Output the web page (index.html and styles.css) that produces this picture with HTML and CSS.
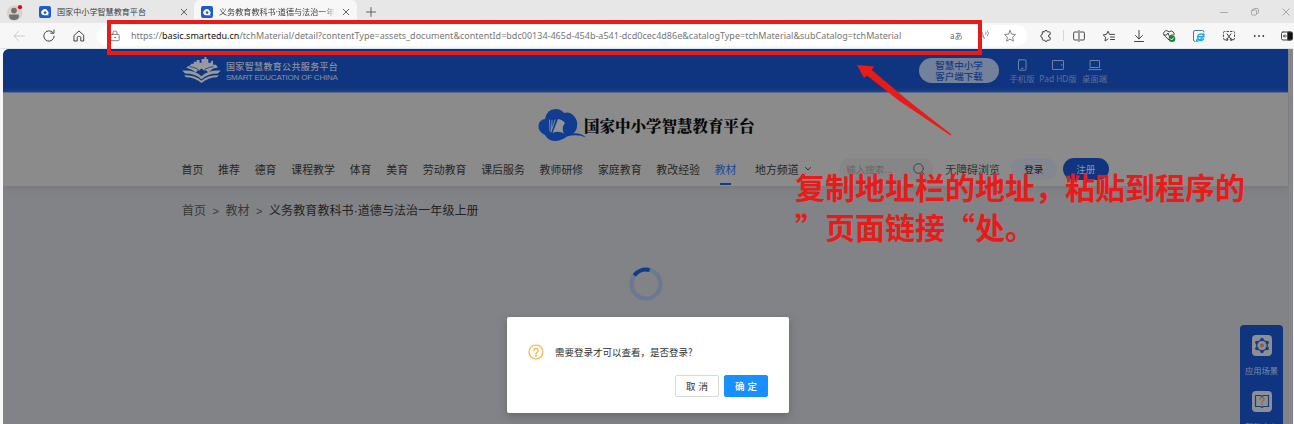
FILE: index.html
```
<!DOCTYPE html>
<html lang="zh-CN">
<head>
<meta charset="utf-8">
<title>国家中小学智慧教育平台</title>
<link rel="stylesheet" href="styles.css">
</head>
<body>
<div class="window">
  <header class="tabs">
    <svg class="avatar" width="18" height="20" viewBox="0 0 18 20"><circle cx="8.5" cy="10" r="7.8" fill="#d6d3d0"/><circle cx="8" cy="7.6" r="2.9" fill="#77716c"/><path d="M3 12.5q0-1 1-1h8q1 0 1 1 0 4.5-5 4.5t-5-4.500z" fill="#77716c"/><circle cx="14" cy="4.200" r="2.100" fill="#d80d18"/></svg>
    <div class="tab">
      <svg class="fav" viewBox="0 0 12 12"><rect width="12" height="12" rx="2" fill="#1f5ccb"/><path d="M3 8.400a2.300 2.300 0 0 1 .2-3.800 2.900 2.900 0 0 1 5.400.5 2 2 0 0 1 .3 3.300l1 .8H5a3 3 0 0 1-2-.8z" fill="#fff"/><circle cx="6.100" cy="6.600" r="1.300" fill="#1f5ccb"/></svg>
      <span class="tab-title">国家中小学智慧教育平台</span>
      <svg class="close" viewBox="0 0 8 8"><path d="M1.200 1.200l5.600 5.600M6.800 1.200L1.200 6.800"/></svg>
    </div>
    <div class="tab active">
      <svg class="fav" viewBox="0 0 12 12"><rect width="12" height="12" rx="2" fill="#1f5ccb"/><path d="M3 8.400a2.300 2.300 0 0 1 .2-3.800 2.900 2.900 0 0 1 5.400.5 2 2 0 0 1 .3 3.300l1 .8H5a3 3 0 0 1-2-.8z" fill="#fff"/><circle cx="6.100" cy="6.600" r="1.300" fill="#1f5ccb"/></svg>
      <span class="tab-title fade">义务教育教科书·道德与法治一年</span>
      <svg class="close" viewBox="0 0 8 8"><path d="M1.200 1.200l5.600 5.600M6.800 1.200L1.200 6.800"/></svg>
    </div>
    <svg class="plus" viewBox="0 0 10 10"><path d="M5 .5v9M.5 5h9"/></svg>
    <div class="controls">
      <svg viewBox="0 0 10 10"><path d="M1.500 5.500h7"/></svg>
      <svg viewBox="0 0 10 10"><rect x="1.500" y="3" width="5" height="5" rx="1"/><path d="M3.500 3V2.500q0-1 1-1h2.500q1.500 0 1.500 1.500v2.500q0 1-1 1h-1"/></svg>
      <svg viewBox="0 0 10 10"><path d="M1.800 1.800l6.400 6.400M8.200 1.800L1.800 8.200"/></svg>
    </div>
  </header>

  <div class="toolbar">
    <div class="nav-icons">
      <svg class="dim" viewBox="0 0 14 14"><path d="M12.500 7H2M6.500 2.500L2 7l4.500 4.500"/></svg>
      <svg viewBox="0 0 14 14"><path d="M12.200 7.200a5.200 5.200 0 1 1-1.600-4M12 1v3.200H8.700"/></svg>
      <svg viewBox="0 0 14 14"><path d="M2.300 6.200L7 2l4.700 4.200V12H8.800V8.600q0-1.100-1.100-1.100H6.300q-1.100 0-1.100 1.100V12H2.300z"/></svg>
    </div>
    <div class="address">
      <svg class="lock" viewBox="0 0 12 12"><rect x="1.800" y="4.300" width="8.400" height="6.400" rx="1.200"/><path d="M3.900 4.300V3a2.100 2.100 0 0 1 4.200 0v1.300"/><circle cx="6" cy="7.500" r=".5"/></svg>
      <span class="url">https://<b>basic.smartedu.cn</b>/tchMaterial/detail?contentType=assets_document&amp;contentId=bdc00134-465d-454b-a541-dcd0cec4d86e&amp;catalogType=tchMaterial&amp;subCatalog=tchMaterial</span>
      <span class="translate">aあ</span>
      <span class="read">A<svg viewBox="0 0 5 7"><path d="M.8 2q1 1 0 2.500M2.500.8q2.200 2.200 0 5"/></svg></span>
      <svg class="star" viewBox="0 0 14 14"><path d="M7 1.500l1.600 3.600 3.900.4-2.900 2.700.8 3.900L7 10.100l-3.400 2 .8-3.900-2.900-2.700 3.900-.4z"/></svg>
    </div>
    <div class="tools">
      <svg class="puzzle" viewBox="0 0 14 14"><path d="M4 2.800h1.700q.1-1.500 1.300-1.500t1.400 1.500h1.900q.9 0 .9.900v1.800q-1.700 0-1.700 1.500t1.700 1.500v1.800q0 .9-.9.900H8.300q-.1 1.300-1.300 1.300t-1.300-1.300H4.200q-.9 0-.9-.9V8.600Q1.800 8.500 1.800 7t1.500-1.500V3.500q0-.7.700-.7z"/></svg>
      <i class="rule"></i>
      <svg viewBox="0 0 14 14"><path d="M5.500 3H2.800q-1.200 0-1.200 1.200v5.600q0 1.200 1.200 1.200h2.700M8.500 3h2.700q1.200 0 1.200 1.200v5.600q0 1.200-1.200 1.200H8.500M7 1.500v11"/></svg>
      <svg viewBox="0 0 14 14"><path d="M6 10l-3 2 .6-3.700L1.200 5.900l3.300-.5L6 2.200l1.500 3.200H12.500M8.500 8h4M8.500 10.500h4"/></svg>
      <svg viewBox="0 0 14 14"><path d="M7 1.500v8.300M3.500 6.500L7 10l3.500-3.500M2.500 12.500h9"/></svg>
      <svg viewBox="0 0 14 14"><path d="M7 11L2.300 6.500a2.800 2.800 0 0 1 .2-4A3 3 0 0 1 7 3a3 3 0 0 1 4.300 0q1.200 1.300.7 3M2 6h2.500L6 4l1.600 4L9 6h2"/><circle cx="10" cy="9.800" r="3.300" fill="#12862b" stroke="none"/><path d="M8.400 9.800l1.200 1.200 2-2.200" stroke="#fff"/></svg>
      <svg viewBox="0 0 14 14"><path d="M3 12.500q-1.500 0-1.500-1.500V3Q1.500 1.500 3 1.500h7.500q1.500 0 1.500 1.500" stroke="#58758a"/><path d="M11.500 10a3.200 3.200 0 1 1 .5-2.200H6M5 10.500q-1 2.500.8 1.700 4-2 6-5.700.8-2.300-1.800-1.200" stroke="#1badea" stroke-width="1.400"/></svg>
      <svg viewBox="0 0 14 14"><path d="M3 2.500h-.5q-1 0-1 1V4M5 2.500h1.500M8.500 2.500H10M12 2.500q.6.200.6 1V4M1.500 6v1.500M12.500 6v1.500M1.500 9.500q0 1.500 1.300 1.500M12.500 9.500q0 1.500-1.300 1.500M5 4.800l3.700 5M9 4.800l-3.700 5"/><circle cx="4.800" cy="10.700" r=".9"/><circle cx="9.200" cy="10.700" r=".9"/></svg>
      <svg viewBox="0 0 14 14"><g fill="#333" stroke="none"><circle cx="2.700" cy="7" r=".9"/><circle cx="7" cy="7" r=".9"/><circle cx="11.300" cy="7" r=".9"/></g></svg>
      <svg class="side-toggle" viewBox="0 0 14 14"><rect x="1.500" y="3" width="10.500" height="8" rx="1.500"/><path d="M8 3h3q1.500 0 1.500 1.500v5q0 1.500-1.500 1.500H8z" fill="#111"/><path d="M6.500 7h-3M4.700 5.800L3.500 7l1.200 1.200"/></svg>
    </div>
  </div>

  <main class="page">
    <section class="brandbar">
      <svg class="book" viewBox="0 0 40 28"><g fill="#989a9e"><path d="M4 11l5-3v-1h3V5h3V3h3v3h2V2h3V0h2v2h2v4h3V4h2v4h3l2 3-5 1-5 4-2-2h-9l-2 2q-4-3-10-5z"/><path d="M0 14q13-1 20 6 7-7 20-6l-3 3q-11 0-17 6-6-6-17-6z"/><path d="M2 19q12 0 18 5.500Q26 19 38 19l-2 2q-9 0-16 6-7-6-16-6z"/></g><circle cx="20" cy="14" r="1.800" fill="#103580"/><path d="M8 10q9 1 12 7 3-6 12-7" fill="none" stroke="#103580" stroke-width=".8"/></svg>
      <div class="brand-text"><span>国家智慧教育公共服务平台</span><small>SMART EDUCATION OF CHINA</small></div>
      <div class="download"><span>智慧中小学</span><span>客户端下载</span></div>
      <div class="device phone"><svg viewBox="0 0 14 12"><rect x="3.500" y=".8" width="7.500" height="10.400" rx=".8"/><path d="M6.500 9.300h1.500"/></svg>手机版</div>
      <div class="device pad"><svg viewBox="0 0 14 12"><rect x="1.500" y="1.500" width="11" height="9" rx=".5"/><path d="M10.800 5.500v1"/></svg>Pad HD版</div>
      <div class="device desk"><svg viewBox="0 0 14 12"><rect x="2.500" y="1.500" width="9" height="7"/><path d="M.8 10.600h12.400"/></svg>桌面端</div>
    </section>

    <section class="masthead">
      <div class="logo">
        <svg viewBox="0 0 48 34"><path d="M7 27Q0 24 .5 17.500 1 12 7 11 9 1 17.500 1 23 1 26 5q6-1.500 9.500 2.500Q40 12 39 18q0 5-4 7.500 7-1 13 4-9-4-19-1-9 6.500-17 3.500-3-1.500-5-5z" fill="#103c91"/><path d="M14.500 25l5.500-14q4.500.5 7 4-4 5-1 10.500-5-3-11.500-.5z" fill="#929497"/><path d="M11.500 12l.5 11M14 12.500l-.5 10M17 12l-4 12" stroke="#929497" stroke-width=".9" fill="none"/></svg>
        <span>国家中小学智慧教育平台</span>
      </div>
      <nav class="menu">
        <a>首页</a><a>推荐</a><a>德育</a><a>课程教学</a><a>体育</a><a>美育</a><a>劳动教育</a><a>课后服务</a><a>教师研修</a><a>家庭教育</a><a>教改经验</a><a class="current">教材</a><a class="area">地方频道<svg viewBox="0 0 8 6"><path d="M1.500 1.500L4 4l2.500-2.500"/></svg></a>
        <div class="search"><span>输入搜索...</span><svg viewBox="0 0 14 14"><circle cx="6.500" cy="6.500" r="4.800"/><path d="M10 10l2.200 2.200"/></svg></div>
        <span class="access">无障碍浏览</span>
        <span class="pill login">登录</span>
        <span class="pill register">注册</span>
      </nav>
    </section>

    <div class="crumbs"><span>首页</span><i>&gt;</i><span>教材</span><i>&gt;</i><span class="here">义务教育教科书·道德与法治一年级上册</span></div>

    <svg class="spinner" viewBox="0 0 34 34"><circle cx="17" cy="17" r="14.500" fill="none" stroke="#6b7892" stroke-width="4"/><path d="M5.300 8.400A14.500 14.500 0 0 1 20.600 3" fill="none" stroke="#103a8c" stroke-width="4"/></svg>
  </main>

  <div class="dialog">
    <div class="message"><svg viewBox="0 0 16 16"><circle cx="8" cy="8" r="7"/><path d="M5.900 6.400a2.100 2.100 0 1 1 3.100 1.900q-1 .5-1 1.400"/><circle cx="8" cy="11.600" r=".4"/></svg><span>需要登录才可以查看，是否登录?</span></div>
    <div class="actions"><button>取消</button><button class="primary">确定</button></div>
  </div>

  <aside class="dock">
    <svg viewBox="0 0 20 21"><rect width="20" height="21" rx="4" fill="#8d8f94"/><path d="M10 4.500l5.200 3v6L10 16.500l-5.200-3v-6z" fill="none" stroke="#173d83" stroke-width="1.300"/><g fill="#173d83"><circle cx="10" cy="4.500" r="1.700"/><circle cx="15.200" cy="7.500" r="1.700"/><circle cx="15.200" cy="13.500" r="1.700"/><circle cx="10" cy="16.500" r="1.700"/><circle cx="4.800" cy="13.500" r="1.700"/><circle cx="4.800" cy="7.500" r="1.700"/></g><circle cx="10" cy="10.500" r="2" fill="#a2582e"/></svg>
    <span>应用场景</span>
    <svg viewBox="0 0 20 21"><rect width="20" height="21" rx="4" fill="#8d8f94"/><path d="M10 5.500L8.500 4.500h-5v11h5l1.500 1 1.500-1h5v-11h-5z" fill="none" stroke="#173d83" stroke-width="1.200"/><path d="M8 8.300a2 2 0 1 1 3 1.700q-1 .5-1 1.700M10 13.200v1" fill="none" stroke="#98652e" stroke-width="1.300"/></svg>
    <span>帮助中心</span>
  </aside>

  <div class="highlight"></div>
  <svg class="arrow" viewBox="0 0 96 72"><path d="M0 0L17 1.500 14.800 5 51 35.500 94.500 69.500 93.500 70.500 41 35 10 10.500 7 13z" fill="#e81b19"/></svg>
  <div class="note">复制地址栏的地址，粘贴到程序的<br>”页面链接“处。</div>
</div>
</body>
</html>
```
FILE: styles.css
```
* { box-sizing: border-box; }
body { margin: 0; font-family: "Noto Sans CJK SC", "Noto Sans", sans-serif; }
svg { display: block; flex: none; fill: none; stroke-linecap: round; stroke-linejoin: round; }
.window { position: relative; width: 1294px; height: 424px; overflow: hidden; background: #f7f7f7; white-space: nowrap; display: flex; flex-direction: column; }

.tabs { height: 23px; background: #e7e7e7; display: flex; align-items: center; padding-left: 6px; flex: none; }
.avatar { margin-right: 6px; margin-top: 3px; }
.tab { width: 164px; height: 23px; padding-left: 9px; display: flex; align-items: center; }
.tab.active { width: 163px; padding-left: 7px; background: #f7f7f7; border-radius: 6px 6px 0 0; }
.fav { width: 12px; height: 12px; margin-right: 6px; }
.tab-title { width: 119px; font: 8.1px/12px "Noto Sans", "Noto Sans CJK SC", sans-serif; color: #3c3c3c; }
.fade { -webkit-mask-image: linear-gradient(90deg, #000 86%, transparent); mask-image: linear-gradient(90deg, #000 86%, transparent); }
.close { width: 8px; height: 8px; margin-left: 4px; stroke: #555; stroke-width: .9; }
.plus { width: 10px; height: 10px; margin-left: 9px; stroke: #555; stroke-width: .9; }
.controls { margin-left: auto; display: flex; gap: 21px; margin-right: 3px; }
.controls svg { width: 10px; height: 10px; stroke: #999; stroke-width: .8; }

.toolbar { height: 26px; display: flex; align-items: center; flex: none; border-bottom: 1px solid #dbe3ec; }
.toolbar svg { width: 14px; height: 14px; stroke: #444; stroke-width: 1; }
.nav-icons { display: flex; gap: 16px; padding-left: 12px; width: 97px; }
.nav-icons svg.dim { stroke: #ccc; }
.address { width: 931px; height: 21px; border-radius: 11px; background: #fff; display: flex; align-items: center; padding-left: 12px; }
.address .lock { width: 12px; height: 12px; stroke: #777; stroke-width: .9; margin-right: 10px; }
.url { width: 819px; font: 9px/14px "Noto Sans", sans-serif; letter-spacing: .013px; color: #777; }
.url b { font-weight: 400; color: #111; }
.translate { width: 27px; font-size: 8px; line-height: 12px; color: #666; }
.read { width: 26px; display: flex; align-items: flex-start; font: 9px/12px "Noto Sans", sans-serif; color: #777; padding-left: 2px; }
.read svg { width: 5px; height: 7px; stroke: #777; stroke-width: .8; }
.address .star { stroke: #777; stroke-width: .9; }
.tools { display: flex; align-items: center; gap: 16px; padding-left: 12px; }
.tools .rule { width: 1px; height: 11px; background: #d5d5d5; margin: 0 -8px 0 -6px; }
.tools .side-toggle { margin-left: -2px; }

.page { flex: 1; margin-left: 3px; border-right: 4px solid #85868a; width: 1290px; background: #828387; border-top-left-radius: 6px; overflow: hidden; }
.brandbar { height: 44px; width: 1285px; padding-left: 179px; display: flex; align-items: center; background: #103580; border-bottom: 1px solid #526b9d; }
.book { width: 39px; height: 27px; }
.brand-text { margin-left: 5px; width: 693px; color: #8c919a; padding-top: 2px; }
.brand-text span { display: block; font: 500 9px/11px "Noto Sans CJK SC", sans-serif; letter-spacing: .35px; }
.brand-text small { display: block; font: 8px/11px "Liberation Sans", sans-serif; letter-spacing: -.22px; }
.download { width: 80px; height: 25px; border-radius: 13px; background: #74819a; color: #173c83; font-size: 9.500px; line-height: 11px; font-weight: 500; display: flex; flex-direction: column; align-items: center; justify-content: center; margin-right: 3px; }
.device { display: flex; flex-direction: column; align-items: center; font: 8.300px/12px "Noto Sans", "Noto Sans CJK SC", sans-serif; color: #5d719a; gap: 2px; padding-top: 2px; }
.device svg { width: 14px; height: 12px; stroke: #6f81a4; stroke-width: 1; }
.phone { width: 40px; }
.pad { width: 32px; }
.desk { width: 41px; }

.masthead { width: 1285px; height: 93px; background: #8b8b8b; display: flex; flex-direction: column; box-shadow: 0 2px 7px #77787c; }
.logo { height: 65px; padding: 0 0 2px 535px; display: flex; align-items: center; }
.logo svg { width: 48px; height: 34px; }
.logo span { font: 900 15.500px/22px "Noto Serif CJK SC", "Noto Sans CJK SC", serif; color: #080808; margin-left: -2px; }
.menu { height: 28px; padding-left: 178.500px; display: flex; align-items: center; font-size: 10.900px; line-height: 16px; color: #262626; padding-bottom: 6px; }
.menu a { margin-right: 14.800px; }
.menu .current { color: #1a48a0; margin-right: 18.500px; position: relative; }
.current::after { content: ""; position: absolute; left: 5px; top: 22px; width: 11px; height: 2px; background: #103a90; }
.menu .area { display: flex; align-items: center; width: 68px; gap: 5px; }
.area svg { width: 8px; height: 6px; stroke: #333; stroke-width: 1; }
.search { width: 94px; height: 22px; border-radius: 11px; background: #868686; color: #666; font-size: 9.500px; display: flex; align-items: center; padding-left: 7px; margin-left: 1.500px; }
.search span { width: 66px; }
.search svg { width: 14px; height: 14px; stroke: #444; stroke-width: 1; }
.access { margin-left: 12px; width: 66px; color: #333; }
.pill { width: 46px; height: 22px; border-radius: 11px; font-size: 9.500px; line-height: 22px; text-align: center; background: #838790; color: #111; margin-left: -.5px; }
.register { background: #103580; color: #8994aa; margin-left: 6px; }

.crumbs { display: flex; padding: 15px 0 0 179px; font: 12px/20px "Liberation Sans", "Noto Sans CJK SC", sans-serif; color: #383838; }
.crumbs i { width: 19.500px; text-align: center; font-style: normal; font-size: 11px; }
.crumbs .here { color: #222; letter-spacing: .09px; }
.spinner { width: 34px; height: 34px; margin: 45.500px 0 0 625.500px; stroke-linecap: butt; }

.dialog { position: absolute; left: 507px; top: 317px; width: 282px; height: 96px; background: #fff; border-radius: 2px; box-shadow: 0 3px 9px #66676b; padding: 26px 21px 0; }
.message { display: flex; align-items: center; height: 18px; font: 9.500px/16px "Noto Sans CJK SC", sans-serif; color: #2e2e2e; gap: 11px; }
.message svg { width: 16px; height: 16px; stroke: #eeb03c; stroke-width: 1.200; }
.actions { display: flex; justify-content: flex-end; gap: 5px; margin-top: 14px; }
.actions button { width: 44px; height: 22px; padding: 0; border: 1px solid #d9d9d9; border-radius: 2px; background: #fff; font: 9.500px/20px "Noto Sans CJK SC", sans-serif; color: #333; letter-spacing: 3px; text-indent: 3px; }
.actions .primary { background: #1890ff; border-color: #1890ff; color: #fff; font-weight: 500; }

.dock { position: absolute; left: 1240px; top: 325px; width: 43px; height: 110px; background: #103580; border-radius: 4px; padding-top: 10px; display: flex; flex-direction: column; align-items: center; color: #7f8ca8; font-size: 8.300px; line-height: 12px; }
.dock svg { width: 20px; height: 21px; }
.dock span { margin: 8px 0 15px; }
.highlight { position: absolute; left: 107px; top: 20px; width: 875px; height: 35px; border: 4px solid #e81b19; }
.arrow { position: absolute; left: 857px; top: 65px; width: 96px; height: 72px; }
.note { position: absolute; left: 795px; top: 166px; font: 700 30px/40px "Noto Sans CJK SC", sans-serif; color: #e81b19; }
```
